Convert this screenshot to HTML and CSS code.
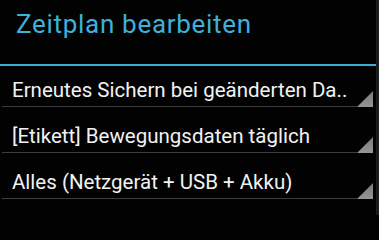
FILE: index.html
```html
<!DOCTYPE html>
<html lang="de">
<head>
<meta charset="utf-8">
<title>Zeitplan bearbeiten</title>
<link rel="stylesheet" href="styles.css">
</head>
<body>
<div class="screen">
  <div class="dialog">
    <header class="dialog-header">
      <h1 class="dialog-title">Zeitplan bearbeiten</h1>
    </header>
    <div class="spinner-list">
      <div class="spinner">
        <span class="spinner-label">Erneutes Sichern bei geänderten Da..</span>
        <span class="spinner-corner"></span>
      </div>
      <div class="spinner">
        <span class="spinner-label">[Etikett] Bewegungsdaten täglich</span>
        <span class="spinner-corner"></span>
      </div>
      <div class="spinner">
        <span class="spinner-label">Alles (Netzgerät + USB + Akku)</span>
        <span class="spinner-corner"></span>
      </div>
    </div>
  </div>
  <div class="edge"></div>
</div>
</body>
</html>
```
FILE: styles.css
```css
html, body {
  margin: 0;
  padding: 0;
  background: #020202;
}
.screen {
  display: flex;
  width: 379px;
  height: 215px;
  overflow: hidden;
  font-family: Roboto, "Noto Sans", "DejaVu Sans", sans-serif;
}
.dialog {
  width: 376px;
  flex: none;
  background: #020202;
}
.edge {
  flex: 1;
  background: #1c1c1c;
}
.dialog-header {
  height: 64px;
  border-bottom: 2px solid #3aaed8;
  box-sizing: content-box;
}
.dialog-title {
  margin: 0;
  padding: 9px 0 0 16px;
  font-size: 26px;
  letter-spacing: 0.7px;
  line-height: 30px;
  font-weight: 400;
  color: #3fb0d9;
}
.spinner-list {
  display: flex;
  flex-direction: column;
  gap: 5px;
}
.spinner {
  display: flex;
  align-items: flex-end;
  height: 41px;
  margin-left: 2px;
  margin-right: 3px;
}
.spinner-label {
  flex: 1;
  box-sizing: border-box;
  height: 41px;
  padding: 12px 0 4px 10px;
  line-height: 24px;
  font-size: 20.5px;
  color: #f2f2f2;
  white-space: nowrap;
  border-bottom: 1px solid #3c3c3c;
}
.spinner-corner {
  flex: none;
  width: 16px;
  height: 16px;
  background: linear-gradient(#7a7a7a, #959595);
  clip-path: polygon(100% 0, 100% 100%, 0 100%);
}
```
